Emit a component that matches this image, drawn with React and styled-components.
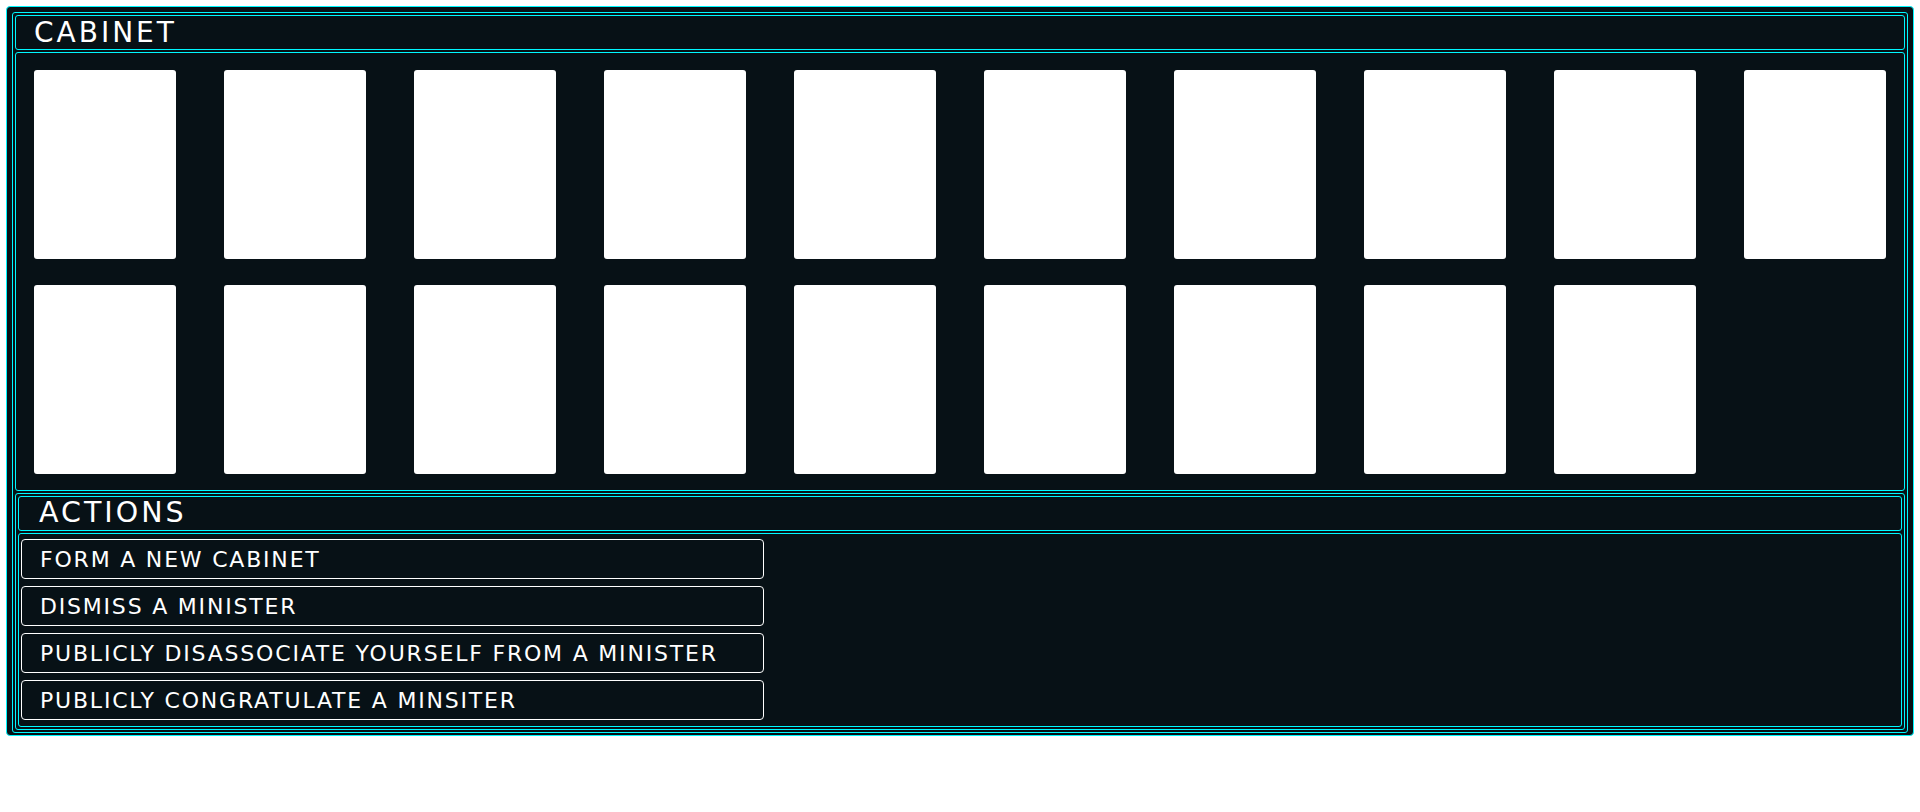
import React from "react";
import styled, { createGlobalStyle } from "styled-components";

const ministers = Array.from({ length: 19 }, (_, i) => i);

const actions = [
  "Form a new cabinet",
  "Dismiss a minister",
  "Publicly disassociate yourself from a minister",
  "Publicly congratulate a minsiter",
];

const App = () => {
  return (
    <>
      <GlobalStyle />
      <Frame>
        <Panel>
          <PanelHeader>Cabinet</PanelHeader>
          <CabinetBody>
            {ministers.map((m) => (
              <Card key={m} />
            ))}
          </CabinetBody>
          <Panel>
            <PanelHeader $indent={20} $size={28.5}>
              Actions
            </PanelHeader>
            <ActionsBody>
              {actions.map((a) => (
                <ActionButton key={a}>{a}</ActionButton>
              ))}
            </ActionsBody>
          </Panel>
        </Panel>
      </Frame>
    </>
  );
};

const GlobalStyle = createGlobalStyle`
  body {
    margin: 0;
    background: #fff;
    font-family: "DejaVu Sans", "Liberation Sans", sans-serif;
  }
`;

const Frame = styled.div`
  margin: 6px 6px 0 6px;
  padding: 5px 5px 2px 5px;
  border: 1px solid #00f8ff;
  border-radius: 4px;
  background: #071116;
`;

const Panel = styled.section`
  display: flex;
  flex-direction: column;
  gap: 2px;
  padding: 2px;
  border: 1px solid #00f8ff;
  border-radius: 3px;
`;

const PanelHeader = styled.h2`
  box-sizing: border-box;
  height: 35px;
  margin: 0;
  padding-left: ${(p) => p.$indent || 18}px;
  display: flex;
  align-items: center;
  border: 1px solid #00f8ff;
  border-radius: 3px;
  color: #fff;
  font-size: ${(p) => p.$size || 28}px;
  font-weight: normal;
  letter-spacing: 3px;
  text-transform: uppercase;
  line-height: 1;
`;

const CabinetBody = styled.div`
  display: grid;
  grid-template-columns: repeat(10, 142px);
  grid-auto-rows: 189px;
  column-gap: 48px;
  row-gap: 26px;
  padding: 17px 18px 16px;
  border: 1px solid #00f8ff;
  border-radius: 3px;
`;

const Card = styled.div`
  background: #fff;
  border-radius: 3px;
`;

const ActionsBody = styled.div`
  display: flex;
  flex-direction: column;
  align-items: flex-start;
  gap: 7px;
  padding: 5px 2px 6px 2px;
  border: 1px solid #00f8ff;
  border-radius: 3px;
`;

const ActionButton = styled.button`
  box-sizing: border-box;
  width: 743px;
  height: 40px;
  padding: 0 0 0 18px;
  display: flex;
  align-items: center;
  background: #071116;
  border: 1px solid #fff;
  border-radius: 4px;
  color: #fff;
  font-family: "DejaVu Sans", "Liberation Sans", sans-serif;
  font-size: 22px;
  letter-spacing: 1.8px;
  text-transform: uppercase;
  cursor: pointer;
`;

export default App;
